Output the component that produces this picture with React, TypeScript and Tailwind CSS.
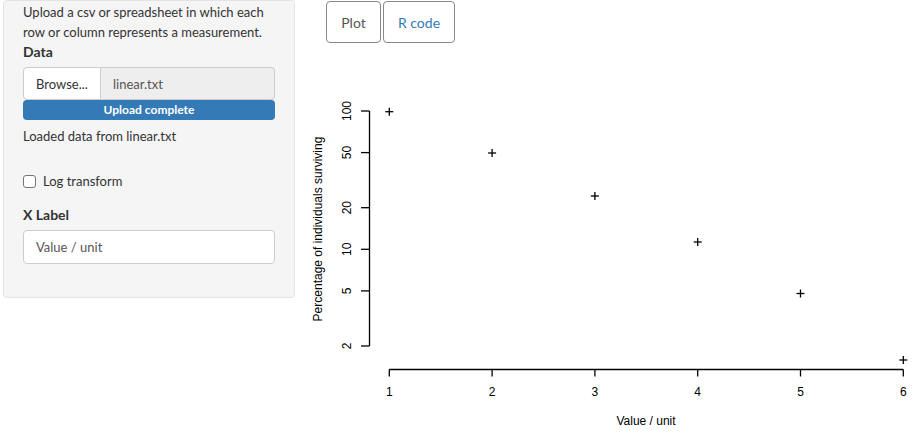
import React from 'react'

const yTicks = [
    { v: '100', y: 111 },
    { v: '50', y: 152.6 },
    { v: '20', y: 207.7 },
    { v: '10', y: 249.3 },
    { v: '5', y: 290.9 },
    { v: '2', y: 346 },
]

// page coords of the data points
const points = [
    [389.3, 111.7],
    [492.1, 153],
    [594.9, 196],
    [697.7, 242],
    [800.5, 293.5],
    [903.3, 360],
]

// svg sits at page (300, 48)
const OX = 300
const OY = 48

function Plot() {
    const xs = [1, 2, 3, 4, 5, 6].map((i) => 389.3 + (i - 1) * 102.8 - OX)
    return (
        <svg width={613} height={390} className="block" style={{ fontFamily: '"Liberation Sans", Arial, sans-serif' }}>
            {/* y axis */}
            <line x1={69.5} x2={69.5} y1={111 - OY} y2={346 - OY} stroke="#000" strokeWidth={1.3} />
            {yTicks.map((t) => (
                <g key={t.v}>
                    <line x1={61} x2={69.5} y1={t.y - OY} y2={t.y - OY} stroke="#000" strokeWidth={1.3} />
                    <text
                        transform={`translate(50.5, ${t.y - OY}) rotate(-90)`}
                        textAnchor="middle"
                        fontSize={12}
                        fill="#000"
                    >
                        {t.v}
                    </text>
                </g>
            ))}

            {/* x axis */}
            <line x1={xs[0]} x2={xs[5]} y1={321.5} y2={321.5} stroke="#000" strokeWidth={1.3} />
            {xs.map((x, i) => (
                <g key={i}>
                    <line x1={x} x2={x} y1={321.5} y2={328.5} stroke="#000" strokeWidth={1.3} />
                    <text x={x} y={348} textAnchor="middle" fontSize={12} fill="#000">
                        {i + 1}
                    </text>
                </g>
            ))}

            {/* points */}
            {points.map(([px, py], i) => (
                <g key={i} stroke="#000" strokeWidth={1.3}>
                    <line x1={px - OX - 4} x2={px - OX + 4} y1={py - OY} y2={py - OY} />
                    <line x1={px - OX} x2={px - OX} y1={py - OY - 4} y2={py - OY + 4} />
                </g>
            ))}

            <text x={346} y={377} textAnchor="middle" fontSize={12} fill="#000">
                Value / unit
            </text>
            <text transform="translate(22, 181) rotate(-90)" textAnchor="middle" fontSize={12} fill="#000">
                Percentage of individuals surviving
            </text>
        </svg>
    )
}

export default function App() {
    return (
        <div
            className="w-[913px] h-[438px] bg-white text-[#333] overflow-hidden flex items-start"
            style={{ fontFamily: 'Lato, "Open Sans", sans-serif' }}
        >
            {/* Sidebar */}
            <div className="ml-[3px] w-[292px] shrink-0 border border-[#e3e3e3] rounded-[4px] bg-[#f5f5f5] px-[19px] pt-[1px] pb-[33px] text-[13px] leading-[20px]">
                <p className="whitespace-nowrap">
                    Upload a csv or spreadsheet in which each
                    <br />
                    row or column represents a measurement.
                </p>

                <div className="font-bold text-[14px]">Data</div>
                <div className="mt-[5px] flex h-[33px]">
                    <div className="w-[78px] flex items-center justify-center bg-white border border-[#ccc] rounded-l-[4px]">
                        Browse...
                    </div>
                    <div className="flex-1 flex items-center pl-[12px] bg-[#eee] border border-l-0 border-[#ccc] rounded-r-[4px] text-[#555]">
                        linear.txt
                    </div>
                </div>
                <div className="h-[20px] rounded-[4px] bg-[#337ab7] text-white text-[12px] font-bold flex items-center justify-center">
                    Upload complete
                </div>
                <p className="mt-[6px]">Loaded data from linear.txt</p>

                <label className="mt-[25px] flex items-center gap-[7px]">
                    <span className="w-[13px] h-[13px] border border-[#767676] rounded-[3px] bg-white" />
                    <span>Log transform</span>
                </label>

                <div className="mt-[14px] font-bold text-[14px]">X Label</div>
                <div className="mt-[5px] h-[34px] bg-white border border-[#ccc] rounded-[4px] flex items-center pl-[12px] text-[#555]">
                    Value / unit
                </div>
            </div>

            {/* Main */}
            <div className="ml-[5px] pt-[1px]">
                <div className="flex gap-[2px] pl-[26px] text-[14px]">
                    <div className="h-[42px] w-[55px] border border-[#888] rounded-[4px] flex items-center justify-center text-[#555]">
                        Plot
                    </div>
                    <div className="h-[42px] w-[72px] border border-[#888] rounded-[4px] flex items-center justify-center text-[#337ab7]">
                        R code
                    </div>
                </div>
                <div className="mt-[5px]">
                    <Plot />
                </div>
            </div>
        </div>
    )
}
